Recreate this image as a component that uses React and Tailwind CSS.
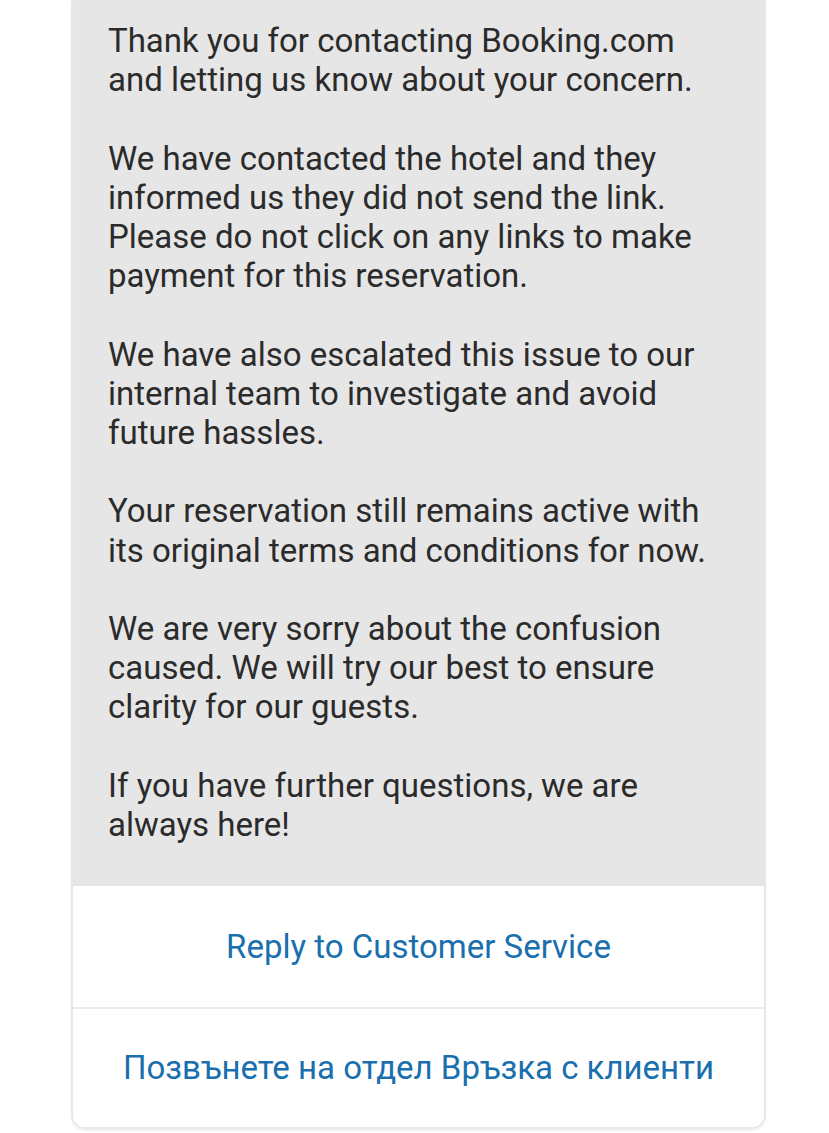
import React from 'react';

const paragraphs = [
  ['Thank you for contacting Booking.com', 'and letting us know about your concern.'],
  ['We have contacted the hotel and they', 'informed us they did not send the link.', 'Please do not click on any links to make', 'payment for this reservation.'],
  ['We have also escalated this issue to our', 'internal team to investigate and avoid', 'future hassles.'],
  ['Your reservation still remains active with', 'its original terms and conditions for now.'],
  ['We are very sorry about the confusion', 'caused. We will try our best to ensure', 'clarity for our guests.'],
  ['If you have further questions, we are', 'always here!'],
];

export default function App() {
  return (
    <div className="min-h-[1133px] bg-white overflow-hidden" style={{ fontFamily: 'Roboto, "Noto Sans", sans-serif' }}>
      <div className="ml-[71px] mr-[63px] rounded-b-[14px] border-2 border-t-0 border-[#e8e8e8] shadow-[0_2px_2px_rgba(0,0,0,0.06)] overflow-hidden">
        {/* message body */}
        <div className="bg-[#e6e6e6] pl-[35px] pr-2 pt-[21px] pb-[42px] flex flex-col gap-[39.2px] text-[33px] leading-[39.2px] text-[#2b2b2b]">
          {paragraphs.map((p, i) => (
            <p key={i}>
              {p.map((line, j) => (
                <span key={j} className="block whitespace-nowrap">{line}</span>
              ))}
            </p>
          ))}
        </div>

        {/* actions */}
        <button className="block w-full h-[121px] bg-white text-[33px] text-[#1a6fae] text-center">
          Reply to Customer Service
        </button>
        <div className="h-[2px] bg-[#ececec]" />
        <button className="block w-full h-[118px] bg-white text-[33px] text-[#1a6fae] text-center">
          Позвънете на отдел Връзка с клиенти
        </button>
      </div>
    </div>
  );
}
